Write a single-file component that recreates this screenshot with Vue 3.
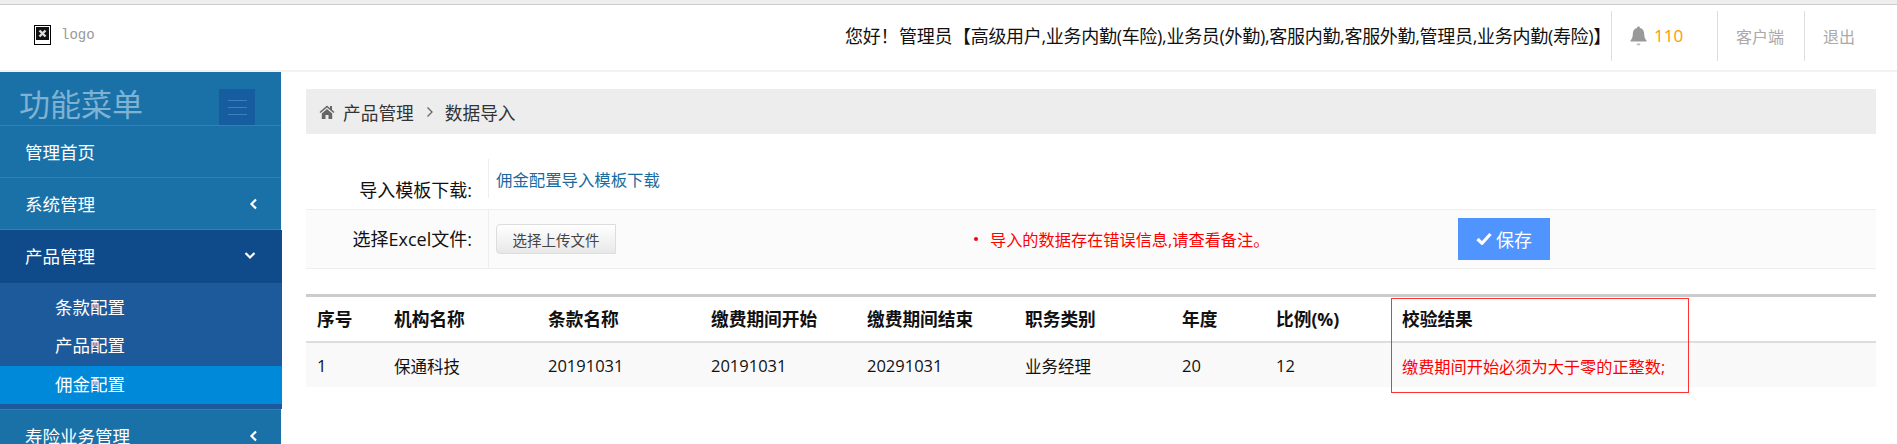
<template>
  <div class="page">
    <header class="topbar">
      <div class="logo">
        <svg class="broken" width="17" height="20" viewBox="0 0 17 20">
          <rect x="0.5" y="0.5" width="16" height="19" fill="#fff" stroke="#000" />
          <rect x="2" y="2" width="13" height="13" fill="#111" />
          <path d="M5.5 5.5l6 6M11.5 5.5l-6 6" stroke="#ddd" stroke-width="2.4" />
        </svg>
        <span>logo</span>
      </div>
      <div class="user">您好！ 管理员 【高级用户,业务内勤(车险),业务员(外勤),客服内勤,客服外勤,管理员,业务内勤(寿险)】</div>
      <div class="tool bell">
        <svg width="17" height="20" viewBox="0 0 17 20">
          <path d="M8.5 0.5c1 0 1.5.7 1.5 1.5 3 .7 4.2 3 4.2 6 0 3 .8 5 2.3 6.5v1H.5v-1C2 13 2.800 11 2.800 8c0-3 1.200-5.300 4.200-6 0-.8.500-1.500 1.500-1.500z" fill="#999" />
          <path d="M6.500 17.500h4c0 1-.9 2-2 2s-2-1-2-2z" fill="#bbb" />
        </svg>
        <span>110</span>
      </div>
      <a class="tool client">客户端</a>
      <a class="tool quit">退出</a>
    </header>

    <div class="body">
      <aside class="sidebar">
        <div class="side-title">
          <span>功能菜单</span>
          <div class="burger"><i></i><i></i><i></i></div>
        </div>
        <div class="menu-item">管理首页</div>
        <div class="menu-item">
          系统管理
          <svg class="chev" width="9" height="12" viewBox="0 0 9 12"><path d="M7 1.500L2.500 6 7 10.500" fill="none" stroke="#fff" stroke-width="2.200" /></svg>
        </div>
        <div class="menu-item open">
          产品管理
          <svg class="chev down" width="12" height="9" viewBox="0 0 12 9"><path d="M1.500 2L6 6.500 10.500 2" fill="none" stroke="#fff" stroke-width="2.200" /></svg>
        </div>
        <div class="submenu">
          <div class="sub-item">条款配置</div>
          <div class="sub-item">产品配置</div>
          <div class="sub-item active">佣金配置</div>
        </div>
        <div class="menu-item last">
          寿险业务管理
          <svg class="chev" width="9" height="12" viewBox="0 0 9 12"><path d="M7 1.500L2.500 6 7 10.500" fill="none" stroke="#fff" stroke-width="2.200" /></svg>
        </div>
      </aside>

      <main class="content">
        <div class="crumb">
          <svg width="16" height="14" viewBox="0 0 16 14"><path d="M8 0.500L0.500 7l1 1.100L8 2.500l6.500 5.600 1-1.100-2.500-2.200V1h-2v2.200zM2.800 8.600V14h3.700v-4h3v4h3.700V8.600L8 4.100z" fill="#666" /></svg>
          <span class="crumb-text">产品管理</span>
          <svg class="crumb-sep" width="8" height="12" viewBox="0 0 8 12"><path d="M1.500 1.500L6 6l-4.500 4.500" fill="none" stroke="#666" stroke-width="1.300" /></svg>
          <span class="crumb-text">数据导入</span>
        </div>

        <div class="form-row first">
          <label>导入模板下载:</label>
          <div class="field"><a class="link">佣金配置导入模板下载</a></div>
        </div>
        <div class="form-row second">
          <label>选择Excel文件:</label>
          <div class="field upload">
            <button class="file-btn">选择上传文件</button>
            <span class="dot"></span>
            <span class="error">导入的数据存在错误信息,请查看备注。</span>
            <button class="save">
              <svg width="16" height="13" viewBox="0 0 16 13"><path d="M1.500 7L6 11.300 14.500 2" fill="none" stroke="#fff" stroke-width="3.200" /></svg>
              保存
            </button>
          </div>
        </div>

        <div class="table-wrap">
          <table>
            <colgroup>
              <col v-for="w in widths" :key="w.k" :style="{ width: w.v + 'px' }" />
            </colgroup>
            <thead>
              <tr><th v-for="h in heads" :key="h">{{ h }}</th></tr>
            </thead>
            <tbody>
              <tr>
                <td v-for="(c, i) in cells" :key="i" :class="{ bad: i === 8 }">{{ c }}</td>
              </tr>
            </tbody>
          </table>
          <div class="mark"></div>
        </div>
      </main>
    </div>
  </div>
</template>

<script setup>
const heads = ["序号", "机构名称", "条款名称", "缴费期间开始", "缴费期间结束", "职务类别", "年度", "比例(%)", "校验结果"];
const cells = ["1", "保通科技", "20191031", "20191031", "20291031", "业务经理", "20", "12", "缴费期间开始必须为大于零的正整数;"];
const widths = [77, 154, 163, 156, 158, 157, 94, 126, 485].map((v, k) => ({ k, v }));
</script>

<style>
html,
body {
  margin: 0;
  height: 444px;
  overflow: hidden;
  background: #fff;
}
</style>

<style scoped>
.page {
  font-family: "Open Sans", "Noto Sans CJK SC", sans-serif;
  font-size: 16px;
  color: #111;
  height: 444px;
  overflow: hidden;
  border-top: 4px solid #eee;
  box-sizing: border-box;
}

.topbar {
  height: 61px;
  padding-bottom: 4px;
  border-top: 1px solid #ccc;
  border-bottom: 2px solid #f2f2f2;
  display: flex;
  align-items: center;
  padding-right: 41px;
}
.logo {
  display: flex;
  align-items: center;
  gap: 10px;
  margin-left: 34px;
  margin-right: auto;
  margin-bottom: 2px;
  color: #999;
  font: 14px "Liberation Mono", monospace;
}
.broken {
  display: block;
}
.user {
  font-size: 18px;
  letter-spacing: -0.300px;
  word-spacing: -3.500px;
  white-space: nowrap;
  margin-bottom: 2px;
}
.tool {
  height: 50px;
  display: flex;
  align-items: center;
  border-left: 1px solid #ddd;
  box-sizing: border-box;
  color: #aaa;
  font-size: 16px;
}
.bell {
  width: 106px;
  padding-left: 18px;
  gap: 7px;
  color: #f90;
  font-size: 17px;
}
.client {
  width: 87px;
  padding-left: 18px;
}
.quit {
  width: 52px;
  padding-left: 18px;
}

.body {
  display: flex;
}
.sidebar {
  width: 281px;
  height: 372px;
  flex: none;
  background: #1a71a8;
  color: #fff;
  font-size: 17.500px;
}
.side-title {
  height: 53px;
  display: flex;
  justify-content: space-between;
  padding-left: 19px;
  padding-right: 26px;
  color: #7fb2d2;
  font-size: 31px;
  line-height: 64px;
  border-bottom: 1px solid #2f82b6;
  overflow: hidden;
}
.burger {
  width: 36px;
  height: 36px;
  margin-top: 17px;
  background: #155d9e;
  display: flex;
  flex-direction: column;
  align-items: center;
  justify-content: center;
  gap: 6px;
}
.burger i {
  display: block;
  width: 19px;
  height: 1px;
  background: #3f7fc0;
}
.menu-item {
  height: 51px;
  display: flex;
  align-items: center;
  justify-content: space-between;
  padding: 0 23px 0 25px;
  border-bottom: 1px solid #2f82b6;
}
.menu-item.open {
  width: 282px;
  box-sizing: border-box;
  height: 53px;
  background: #0f4a8a;
  border-bottom: 0;
  padding-right: 26px;
  padding-bottom: 2px;
}
.menu-item.last {
  border-top: 1px solid #2f82b6;
  border-bottom: 0;
}
.submenu {
  width: 282px;
  background: #1c5a9c;
  padding-bottom: 5px;
}
.sub-item {
  height: 39px;
  padding-left: 55px;
  line-height: 37px;
}
.sub-item:first-child {
  height: 44px;
  line-height: 48px;
}
.sub-item.active {
  height: 38px;
  line-height: 36px;
  background: #0089d9;
}

.content {
  flex: 1;
  padding: 17px 21px 0 25px;
  min-width: 0;
}
.crumb {
  height: 45px;
  background: #ededed;
  display: flex;
  align-items: center;
  padding-left: 13px;
  gap: 8px;
}
.crumb-text {
  font-size: 17.700px;
  color: #333;
}
.crumb-sep {
  margin: 0 3px 0 4px;
}

.form-row {
  display: flex;
  border-bottom: 1px solid #eee;
}
.form-row label {
  width: 166px;
  text-align: right;
  padding-right: 16px;
  flex: none;
  font-size: 18px;
  white-space: nowrap;
}
.form-row.first {
  margin-top: 25px;
  height: 50px;
}
.form-row.first label {
  padding-top: 17px;
  line-height: 28px;
}
.field {
  flex: 1;
  border-left: 1px solid #eee;
  padding-left: 7px;
}
.form-row.first .field {
  height: 39px;
  line-height: 42px;
}
.link {
  color: #1a6b9e;
  font-size: 16.400px;
}
.form-row.second {
  height: 58px;
  background: #fbfbfb;
}
.form-row.second label {
  line-height: 58px;
}
.upload {
  display: flex;
  align-items: center;
}
.file-btn {
  width: 120px;
  height: 30px;
  padding: 0;
  border: 1px solid #ddd;
  border-radius: 4px 0 0 4px;
  background: linear-gradient(#fff, #e8e8e8);
  color: #444;
  font: inherit;
  font-size: 14.500px;
}
.dot {
  width: 4px;
  height: 4px;
  border-radius: 50%;
  background: #f00;
  margin-left: 358px;
}
.error {
  color: #f00;
  margin-left: 12px;
  font-size: 16.200px;
  width: 468px;
}
.save {
  width: 92px;
  height: 42px;
  border: 0;
  padding: 0;
  background: #4f94ff;
  color: #fff;
  font: inherit;
  font-size: 18px;
  display: flex;
  align-items: center;
  justify-content: center;
  gap: 4px;
  margin-top: -1px;
}

.table-wrap {
  margin-top: 25px;
  position: relative;
}
table {
  width: 100%;
  table-layout: fixed;
  border-collapse: collapse;
  border-top: 3px solid #ccc;
}
th {
  height: 46px;
  padding: 0 11px 2px;
  box-sizing: border-box;
  text-align: left;
  font-size: 17.700px;
  font-weight: 700;
  border-bottom: 2px solid #ddd;
  white-space: nowrap;
}
td {
  height: 45px;
  padding: 2px 11px 0;
  box-sizing: border-box;
  background: #f9f9f9;
  font-size: 16.500px;
  white-space: nowrap;
}
td.bad {
  color: #f00;
  font-size: 16.200px;
}
.mark {
  position: absolute;
  left: 1085px;
  top: 4px;
  width: 296px;
  height: 93px;
  border: 1px solid #f33;
}
</style>
